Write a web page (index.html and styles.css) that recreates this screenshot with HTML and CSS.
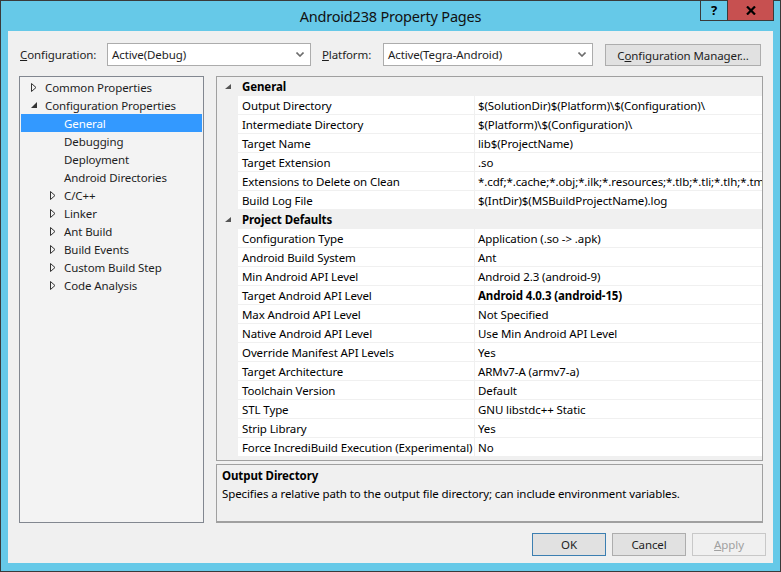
FILE: index.html
```html
<!DOCTYPE html>
<html>
<head>
<meta charset="utf-8">
<title>Android238 Property Pages</title>
<link rel="stylesheet" href="styles.css">
</head>
<body>
<div class="window">
  <div class="titlebar">
    <div class="title">Android238 Property Pages</div>
    <div class="caption-buttons">
      <div class="cap-btn help">?</div>
      <div class="cap-btn close">
        <svg width="10" height="9" viewBox="0 0 10 9"><path d="M1 0.5 L9 8.5 M9 0.5 L1 8.5" stroke="#000" stroke-width="2.2" fill="none"/></svg>
      </div>
    </div>
  </div>
  <div class="client">
    <div class="config-row">
      <label class="lbl lbl-config"><u>C</u>onfiguration:</label>
      <div class="combo combo-config"><span>Active(Debug)</span><svg class="chev" width="8" height="5" viewBox="0 0 8 5"><path d="M0.5 0.5 L4 4 L7.5 0.5" stroke="#6d6d6d" stroke-width="1.6" fill="none"/></svg></div>
      <label class="lbl lbl-platform"><u>P</u>latform:</label>
      <div class="combo combo-platform"><span>Active(Tegra-Android)</span><svg class="chev" width="8" height="5" viewBox="0 0 8 5"><path d="M0.5 0.5 L4 4 L7.5 0.5" stroke="#6d6d6d" stroke-width="1.6" fill="none"/></svg></div>
      <div class="btn btn-manager">C<u>o</u>nfiguration Manager...</div>
    </div>
    <div class="main">
      <div class="tree">
        <div class="item l1"><span class="arrow"><svg width="6" height="9" viewBox="0 0 6 9"><path d="M0.5 0.5 L5 4.5 L0.5 8.5 Z" stroke="#333" fill="none"/></svg></span>Common Properties</div>
        <div class="item l1"><span class="arrow"><svg width="6" height="6" viewBox="0 0 6 6"><path d="M6 0 L6 6 L0 6 Z" fill="#333"/></svg></span>Configuration Properties</div>
        <div class="item l2 selected"><span class="arrow"></span>General</div>
        <div class="item l2"><span class="arrow"></span>Debugging</div>
        <div class="item l2"><span class="arrow"></span>Deployment</div>
        <div class="item l2"><span class="arrow"></span>Android Directories</div>
        <div class="item l2"><span class="arrow"><svg width="6" height="9" viewBox="0 0 6 9"><path d="M0.5 0.5 L5 4.5 L0.5 8.5 Z" stroke="#333" fill="none"/></svg></span>C/C++</div>
        <div class="item l2"><span class="arrow"><svg width="6" height="9" viewBox="0 0 6 9"><path d="M0.5 0.5 L5 4.5 L0.5 8.5 Z" stroke="#333" fill="none"/></svg></span>Linker</div>
        <div class="item l2"><span class="arrow"><svg width="6" height="9" viewBox="0 0 6 9"><path d="M0.5 0.5 L5 4.5 L0.5 8.5 Z" stroke="#333" fill="none"/></svg></span>Ant Build</div>
        <div class="item l2"><span class="arrow"><svg width="6" height="9" viewBox="0 0 6 9"><path d="M0.5 0.5 L5 4.5 L0.5 8.5 Z" stroke="#333" fill="none"/></svg></span>Build Events</div>
        <div class="item l2"><span class="arrow"><svg width="6" height="9" viewBox="0 0 6 9"><path d="M0.5 0.5 L5 4.5 L0.5 8.5 Z" stroke="#333" fill="none"/></svg></span>Custom Build Step</div>
        <div class="item l2"><span class="arrow"><svg width="6" height="9" viewBox="0 0 6 9"><path d="M0.5 0.5 L5 4.5 L0.5 8.5 Z" stroke="#333" fill="none"/></svg></span>Code Analysis</div>
      </div>
      <div class="right">
        <div class="grid">
          <div class="row cat"><span class="gutter"><svg width="6" height="5" viewBox="0 0 6 5"><path d="M6 0 L6 5 L0 5 Z" fill="#555"/></svg></span><span class="cat-name">General</span></div>
          <div class="row"><span class="gutter"></span><span class="name">Output Directory</span><span class="value">$(SolutionDir)$(Platform)\$(Configuration)\</span></div>
          <div class="row"><span class="gutter"></span><span class="name">Intermediate Directory</span><span class="value">$(Platform)\$(Configuration)\</span></div>
          <div class="row"><span class="gutter"></span><span class="name">Target Name</span><span class="value">lib$(ProjectName)</span></div>
          <div class="row"><span class="gutter"></span><span class="name">Target Extension</span><span class="value">.so</span></div>
          <div class="row"><span class="gutter"></span><span class="name">Extensions to Delete on Clean</span><span class="value">*.cdf;*.cache;*.obj;*.ilk;*.resources;*.tlb;*.tli;*.tlh;*.tmp;*.rsp;*.pgc;*.pgd;*.meta</span></div>
          <div class="row"><span class="gutter"></span><span class="name">Build Log File</span><span class="value">$(IntDir)$(MSBuildProjectName).log</span></div>
          <div class="row cat"><span class="gutter"><svg width="6" height="5" viewBox="0 0 6 5"><path d="M6 0 L6 5 L0 5 Z" fill="#555"/></svg></span><span class="cat-name">Project Defaults</span></div>
          <div class="row"><span class="gutter"></span><span class="name">Configuration Type</span><span class="value">Application (.so -&gt; .apk)</span></div>
          <div class="row"><span class="gutter"></span><span class="name">Android Build System</span><span class="value">Ant</span></div>
          <div class="row"><span class="gutter"></span><span class="name">Min Android API Level</span><span class="value">Android 2.3 (android-9)</span></div>
          <div class="row"><span class="gutter"></span><span class="name">Target Android API Level</span><span class="value bold">Android 4.0.3 (android-15)</span></div>
          <div class="row"><span class="gutter"></span><span class="name">Max Android API Level</span><span class="value">Not Specified</span></div>
          <div class="row"><span class="gutter"></span><span class="name">Native Android API Level</span><span class="value">Use Min Android API Level</span></div>
          <div class="row"><span class="gutter"></span><span class="name">Override Manifest API Levels</span><span class="value">Yes</span></div>
          <div class="row"><span class="gutter"></span><span class="name">Target Architecture</span><span class="value">ARMv7-A (armv7-a)</span></div>
          <div class="row"><span class="gutter"></span><span class="name">Toolchain Version</span><span class="value">Default</span></div>
          <div class="row"><span class="gutter"></span><span class="name">STL Type</span><span class="value">GNU libstdc++ Static</span></div>
          <div class="row"><span class="gutter"></span><span class="name">Strip Library</span><span class="value">Yes</span></div>
          <div class="row"><span class="gutter"></span><span class="name">Force IncrediBuild Execution (Experimental)</span><span class="value">No</span></div>
        </div>
        <div class="desc">
          <div class="desc-title">Output Directory</div>
          <div class="desc-text">Specifies a relative path to the output file directory; can include environment variables.</div>
        </div>
      </div>
    </div>
    <div class="buttons">
      <div class="btn dlg default">OK</div>
      <div class="btn dlg">Cancel</div>
      <div class="btn dlg disabled"><u>A</u>pply</div>
    </div>
  </div>
</div>
</body>
</html>
```
FILE: styles.css
```css
* { box-sizing: border-box; }
html, body { margin: 0; padding: 0; }
body {
  width: 781px;
  height: 572px;
  overflow: hidden;
  font-family: "Noto Sans", "Open Sans", sans-serif;
  font-size: 11.5px;
  letter-spacing: -0.1px;
  color: #1e1e1e;
  background: #66c9e8;
}
.window {
  width: 781px;
  height: 572px;
  border: 1px solid #3a3a3a;
  background: #66c9e8;
  padding: 0 7px 8px 7px;
  display: flex;
  flex-direction: column;
}
.titlebar {
  position: relative;
  height: 30px;
  flex: none;
}
.title {
  text-align: center;
  line-height: 31px;
  font-size: 14.5px;
  color: #111;
  letter-spacing: -0.2px;
}
.caption-buttons {
  position: absolute;
  top: -1px;
  right: -1px;
  display: flex;
  border: 1px solid #3a3a3a;
  border-top: none;
}
.cap-btn {
  height: 20px;
  display: flex;
  align-items: center;
  justify-content: center;
  font-weight: bold;
  font-size: 13px;
  color: #000;
}
.cap-btn.help { width: 27px; border-right: 1px solid #3a3a3a; }
.cap-btn.close { width: 45px; background: #c75050; }
.client {
  flex: 1;
  background: #f0f0f0;
  display: flex;
  flex-direction: column;
  padding: 12px 7px 7px 11px;
}
.config-row {
  display: flex;
  align-items: flex-start;
  height: 23px;
  flex: none;
}
.lbl {
  height: 23px;
  line-height: 23px;
  color: #1e1e1e;
}
.lbl-config { width: 88px; padding-left: 1px; }
.lbl-platform { width: 61px; margin-left: 11px; }
.combo {
  height: 23px;
  background: #fff;
  border: 1px solid #acacac;
  display: flex;
  align-items: center;
  justify-content: space-between;
  padding: 0 6px 0 4px;
}
.combo-config { width: 204px; }
.combo-platform { width: 210px; }
.btn {
  display: flex;
  align-items: center;
  justify-content: center;
  background: #e1e1e1;
  border: 1px solid #adadad;
  color: #1e1e1e;
}
.btn-manager {
  width: 156px;
  height: 22px;
  margin-top: 1px;
  margin-left: 12px;
}
.main {
  display: flex;
  margin-top: 10px;
  height: 447px;
  flex: none;
}
.tree {
  width: 185px;
  height: 447px;
  border: 1px solid #828790;
  background: #f3f3f3;
  padding: 1px 1px 0 1px;
}
.item {
  height: 18px;
  display: flex;
  align-items: center;
  padding-left: 10px;
  white-space: nowrap;
  color: #1e1e1e;
}
.item.l2 { padding-left: 29px; }
.item.selected { background: #3399ff; color: #fff; }
.arrow {
  width: 14px;
  flex: none;
  display: flex;
  align-items: center;
}
.right {
  margin-left: 12px;
  width: 547px;
  display: flex;
  flex-direction: column;
}
.grid {
  height: 385px;
  border: 1px solid #a0a0a0;
  background: #f0f0f0;
  overflow: hidden;
  flex: none;
}
.row {
  display: flex;
  height: 19px;
  white-space: nowrap;
}
.gutter {
  width: 21px;
  flex: none;
  display: flex;
  align-items: center;
  padding-left: 8px;
  padding-bottom: 1px;
}
.name {
  width: 237px;
  flex: none;
  background: #fff;
  border-bottom: 1px solid #f0f0f0;
  border-right: 1px solid #f0f0f0;
  padding-left: 4px;
  line-height: 19px;
  color: #000;
  overflow: hidden;
}
.value {
  flex: 1;
  background: #fff;
  border-bottom: 1px solid #f0f0f0;
  padding-left: 3px;
  line-height: 19px;
  color: #000;
  overflow: hidden;
}
.value.bold { font-weight: bold; }
.cat-name {
  padding-left: 4px;
  font-weight: bold;
  line-height: 19px;
  color: #000;
}
.desc {
  margin-top: 3px;
  height: 59px;
  border: 1px solid #a0a0a0;
  border-bottom-width: 2px;
  background: #f0f0f0;
  padding: 2px 5px;
  color: #000;
}
.desc-title { font-weight: bold; line-height: 17px; }
.desc-text { line-height: 18px; margin-top: 1px; }
.buttons {
  display: flex;
  justify-content: flex-end;
  gap: 6px;
  margin-top: 10px;
}
.btn.dlg { width: 74px; height: 23px; }
.btn.default { border-color: #3c7fb1; }
.btn.disabled { color: #a0a0a0; border-color: #c8c8c8; background: #f0f0f0; }
```
